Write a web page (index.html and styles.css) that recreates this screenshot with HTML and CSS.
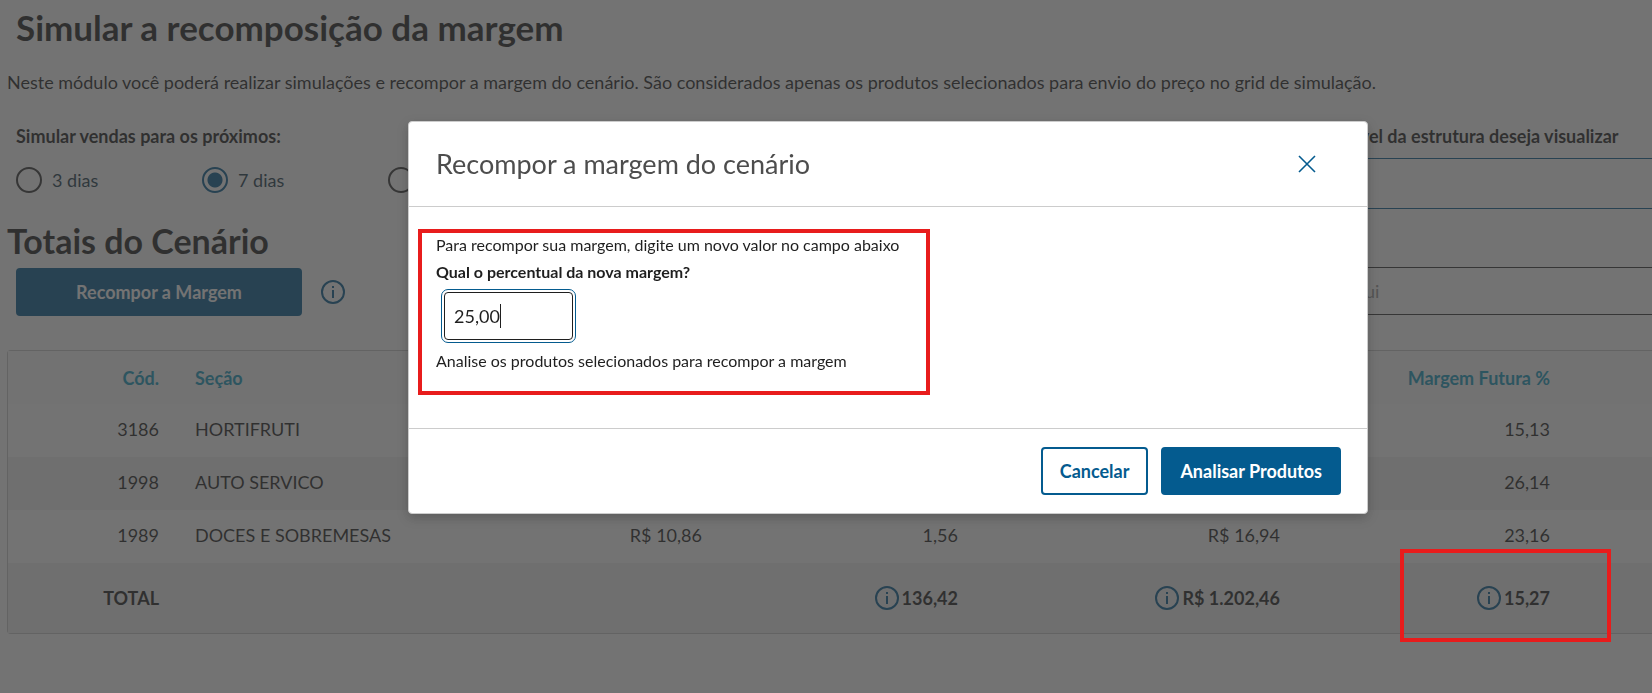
FILE: index.html
```html
<!DOCTYPE html>
<html lang="pt-BR">
<head>
  <meta charset="UTF-8">
  <meta name="viewport" content="width=device-width, initial-scale=1.0">
  <title>Simular a recomposição da margem</title>
  <link rel="stylesheet" href="styles.css">
</head>

<body>
  <!-- info icon, used on the page and in the totals row -->
  <svg class="sprite" aria-hidden="true">
    <symbol id="icon-info" viewBox="0 0 24 24">
      <circle cx="12" cy="12" r="11" fill="none" stroke="currentColor" stroke-width="2"/>
      <path d="M12 6v2M12 10v8" fill="none" stroke="currentColor" stroke-width="2"/>
    </symbol>
  </svg>

  <main class="page">
    <h1 class="title">Simular a recomposição da margem</h1>
    <p class="intro">Neste módulo você poderá realizar simulações e recompor a margem do cenário. São considerados apenas os produtos selecionados para envio do preço no grid de simulação.</p>

    <div class="settings">
      <div class="settings-left">
        <fieldset class="period">
          <legend>Simular vendas para os próximos:</legend>
          <div class="options">
            <label><input type="radio" name="period" value="3">3 dias</label>
            <label><input type="radio" name="period" value="7" checked>7 dias</label>
            <label><input type="radio" name="period" value="15" aria-label="15 dias"></label>
          </div>
        </fieldset>
        <h2 class="subtitle">Totais do Cenário</h2>
        <div class="actions">
          <button class="button primary wide">Recompor a Margem</button>
          <svg class="icon-info"><use href="#icon-info"/></svg>
        </div>
      </div>

      <div class="settings-right">
        <label class="label" for="level">Em qual nível da estrutura deseja visualizar</label>
        <select class="field level" id="level">
          <option></option>
        </select>
        <input class="field search" type="text" placeholder="Digite aqui" aria-label="Pesquisar">
      </div>
    </div>

    <div class="totals-area">
      <table class="totals">
        <colgroup>
          <col class="col-code">
          <col>
          <col class="col-sale">
          <col class="col-sale">
          <col class="col-margin">
          <col class="col-future">
          <col class="col-rest">
        </colgroup>
        <thead>
          <tr>
            <th>Cód.</th>
            <th class="left">Seção</th>
            <th></th>
            <th></th>
            <th></th>
            <th>Margem Futura %</th>
            <th></th>
          </tr>
        </thead>
        <tbody>
          <tr>
            <td>3186</td>
            <td class="left">HORTIFRUTI</td>
            <td></td>
            <td></td>
            <td></td>
            <td>15,13</td>
            <td></td>
          </tr>
          <tr>
            <td>1998</td>
            <td class="left">AUTO SERVICO</td>
            <td></td>
            <td></td>
            <td></td>
            <td>26,14</td>
            <td></td>
          </tr>
          <tr>
            <td>1989</td>
            <td class="left">DOCES E SOBREMESAS</td>
            <td>R$ 10,86</td>
            <td>1,56</td>
            <td>R$ 16,94</td>
            <td>23,16</td>
            <td></td>
          </tr>
        </tbody>
        <tfoot>
          <tr>
            <td>TOTAL</td>
            <td></td>
            <td></td>
            <td><span class="total"><svg class="icon-info"><use href="#icon-info"/></svg>136,42</span></td>
            <td><span class="total"><svg class="icon-info"><use href="#icon-info"/></svg>R$ 1.202,46</span></td>
            <td><span class="total"><svg class="icon-info"><use href="#icon-info"/></svg>15,27</span></td>
            <td></td>
          </tr>
        </tfoot>
      </table>
      <div class="highlight highlight-total"></div>
    </div>
  </main>

  <div class="overlay">
    <section class="modal" role="dialog" aria-labelledby="modal-title">
      <header class="modal-header">
        <h3 id="modal-title">Recompor a margem do cenário</h3>
        <button class="close" aria-label="Fechar">
          <svg viewBox="0 0 18 18"><path d="M1 1l16 16M17 1L1 17" fill="none" stroke="currentColor" stroke-width="1.6"/></svg>
        </button>
      </header>
      <div class="modal-body">
        <p>Para recompor sua margem, digite um novo valor no campo abaixo</p>
        <label for="margin">Qual o percentual da nova margem?</label>
        <div class="margin-field">
          <input id="margin" type="text" value="25,00">
          <span class="caret"></span>
        </div>
        <p>Analise os produtos selecionados para recompor a margem</p>
        <div class="highlight highlight-form"></div>
      </div>
      <footer class="modal-footer">
        <button class="button outline">Cancelar</button>
        <button class="button primary">Analisar Produtos</button>
      </footer>
    </section>
  </div>
</body>
</html>
```
FILE: styles.css
```css
* {
  box-sizing: border-box;
  margin: 0;
  padding: 0;
}

body {
  min-height: 100vh;
  background: white;
  color: #1f1f1f;
  font-family: Lato, sans-serif;
  font-size: 18px;
  line-height: 24px;
}

button, input, select {
  font: inherit;
}

.sprite {
  display: none;
}

.icon-info {
  width: 24px;
  height: 24px;
  color: #045b8f;
}

.page {
  padding: 7px 0 24px 7px;
}

.title, .subtitle {
  font-size: 35px;
  line-height: 40px;
}

.title {
  margin-left: 9px;
}

.intro {
  margin-top: 23px;
}

.settings {
  display: grid;
  grid-template-columns: 1fr 375px;
  margin-top: 30px;
}

.period {
  border: none;
  margin-left: 9px;
}

.period legend, .label {
  font-weight: bold;
}

.options {
  display: flex;
  margin-top: 19px;
}

.options label {
  display: flex;
  align-items: center;
  gap: 10px;
  width: 186px;
  color: #1c3b4c;
}

.options input {
  appearance: none;
  width: 26px;
  height: 26px;
  border: 2px solid #333;
  border-radius: 50%;
}

.options input:checked {
  border-color: #045b8f;
  background: radial-gradient(#045b8f 7px, transparent 8px);
}

.subtitle {
  margin-top: 28px;
  font-size: 34px;
}

.actions {
  display: flex;
  align-items: center;
  gap: 19px;
  margin: 7px 0 0 9px;
}

.button {
  height: 48px;
  padding: 0 17px;
  border: 2px solid #045b8f;
  border-radius: 4px;
  font-weight: bold;
}

.primary {
  background: #045b8f;
  color: white;
}

.outline {
  background: white;
  color: #045b8f;
}

.wide {
  width: 286px;
}

.settings-right {
  display: flex;
  flex-direction: column;
}

.field {
  appearance: none;
  width: 100%;
  padding: 0 16px;
  border: 1px solid #333;
  border-right: none;
  background: white;
  color: #1f1f1f;
}

.level {
  height: 51px;
  margin-top: 10px;
  border-color: #045b8f;
}

.search {
  height: 48px;
  margin-top: 58px;
}

.search::placeholder {
  color: #999;
}

/* totals table */
.totals-area {
  position: relative;
  margin-top: 34px;
}

.totals {
  width: 100%;
  border: 1px solid #c8c8c8;
  border-right: none;
  border-radius: 4px 0 0 4px;
  border-spacing: 0;
  table-layout: fixed;
}

.totals th, .totals td {
  height: 53px;
  padding: 0 18px;
  text-align: right;
}

.totals .left {
  text-align: left;
}

.totals th {
  background: #fafafa;
  color: #149bc0;
}

.totals tbody td {
  padding-bottom: 3px;
}

.totals tbody tr:nth-child(even) td {
  background: #f0f0f0;
}

.totals tfoot td {
  height: 70px;
  background: #f0f0f0;
  font-weight: bold;
}

.col-code {
  width: 169px;
}

.col-sale {
  width: 256px;
}

.col-margin {
  width: 322px;
}

.col-future {
  width: 270px;
}

.col-rest {
  width: 84px;
}

.total {
  display: flex;
  align-items: center;
  justify-content: flex-end;
  gap: 3px;
}

/* red marks over the page and the form */
.highlight {
  position: absolute;
  border: 4px solid #e81c1c;
  pointer-events: none;
}

.highlight-total {
  z-index: 2;
  right: 41px;
  bottom: -8px;
  width: 211px;
  height: 93px;
}

.highlight-form {
  top: 22px;
  left: 9px;
  width: 512px;
  height: 166px;
}

/* modal */
.overlay {
  position: fixed;
  inset: 0;
  z-index: 1;
  display: flex;
  justify-content: center;
  align-items: flex-start;
  padding: 121px 0 0 124px;
  background: rgba(56, 56, 56, 0.7);
}

.modal {
  width: 960px;
  border: 1px solid #ccc;
  border-radius: 4px;
  background: white;
  box-shadow: 0 4px 12px rgba(0, 0, 0, 0.2);
}

.modal-header {
  display: flex;
  align-items: center;
  justify-content: space-between;
  height: 85px;
  padding: 0 51px 0 27px;
  border-bottom: 1px solid #ccc;
}

.modal-header h3 {
  color: #4d4d4d;
  font-size: 27px;
  font-weight: normal;
  line-height: 32px;
}

.close {
  border: none;
  background: none;
  color: #045b8f;
}

.close svg {
  display: block;
  width: 18px;
  height: 18px;
}

.modal-body {
  position: relative;
  height: 222px;
  padding: 25px 27px;
  border-bottom: 1px solid #ccc;
  font-size: 16px;
  line-height: 26px;
}

.modal-body label {
  display: block;
  font-weight: bold;
  line-height: 28px;
}

.margin-field {
  position: relative;
  width: 129px;
  margin: 6px 0 8px 8px;
}

.margin-field input {
  display: block;
  width: 100%;
  height: 48px;
  padding: 0 9px;
  border: 1px solid #1f1f1f;
  border-radius: 4px;
  outline: 1px solid #045b8f;
  outline-offset: 2px;
  color: #1f1f1f;
  font-size: 18px;
}

.caret {
  position: absolute;
  top: 12px;
  left: 56px;
  width: 1px;
  height: 24px;
  background: #1f1f1f;
}

.modal-footer {
  display: flex;
  justify-content: flex-end;
  gap: 13px;
  padding: 18px 26px;
}
```
